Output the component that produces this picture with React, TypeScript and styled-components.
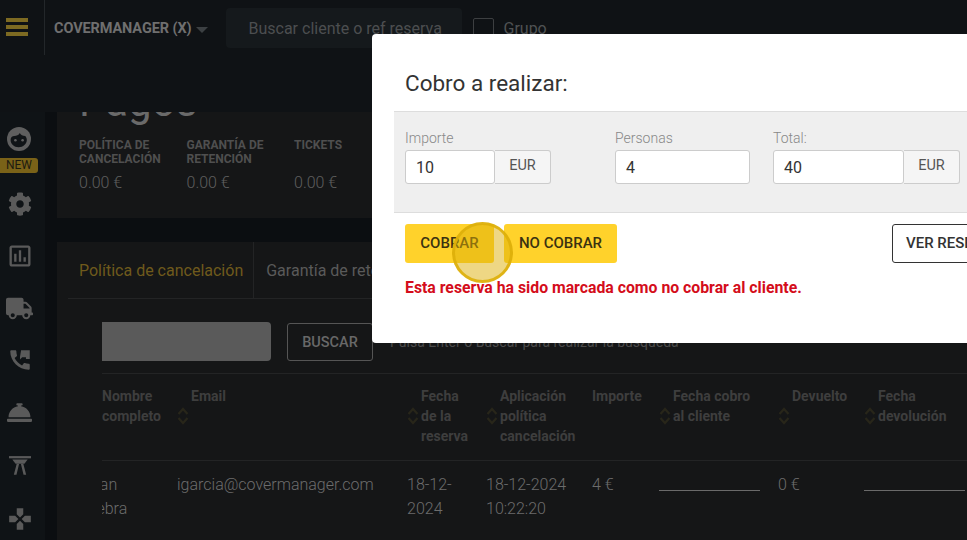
import React from 'react'
import styled, { createGlobalStyle } from 'styled-components'
import { FaCog, FaConciergeBell, FaTruck } from 'react-icons/fa'
import { MdOutlineAssessment, MdGamepad } from 'react-icons/md'

const GlobalStyle = createGlobalStyle`
  html, body {
    margin: 0;
    padding: 0;
    height: 100%;
    overflow: hidden;
    background: #0b0e11;
    font-family: Roboto, "Liberation Sans", sans-serif;
  }
  * { box-sizing: border-box; }
`

const FaceIcon = () => (
  <svg width="24" height="24" viewBox="0 0 24 24">
    <circle cx="12" cy="12" r="12" fill="#5f5f5f" />
    <path
      d="M3.6 13c0-2.6 1.6-4 3.6-4 2.4 0 4.4-.8 5.6-3 .8 1.8 3 3 5.4 3 1 .9 1.6 2.4 1.6 4 0 4-3.6 7.2-8.2 7.2S3.6 17 3.6 13z"
      fill="#101417"
    />
    <circle cx="8.4" cy="13.2" r="1.3" fill="#5f5f5f" />
    <circle cx="15.6" cy="13.2" r="1.3" fill="#5f5f5f" />
  </svg>
)

const PhoneIcon = () => (
  <svg width="26" height="26" viewBox="0 0 24 24" fill="#5a5a5a">
    <path d="M20.01 15.38c-1.23 0-2.42-.2-3.53-.56-.35-.12-.74-.03-1.01.24l-1.57 1.97c-2.83-1.35-5.48-3.9-6.89-6.83l1.95-1.66c.27-.28.35-.67.24-1.02-.37-1.11-.56-2.3-.56-3.53 0-.54-.45-.99-.99-.99H4.19C3.65 3 3 3.24 3 3.99 3 13.28 10.73 21 20.01 21c.71 0 .99-.63.99-1.18v-3.45c0-.54-.45-.99-.99-.99z" />
    <path d="M13 3h8v8h-3.5V9.5H14l-2 2V9z" />
  </svg>
)

const TableIcon = () => (
  <svg width="22" height="20" viewBox="0 0 20 18" fill="#5a5a5a">
    <rect x="0" y="0" width="20" height="2" />
    <path d="M3 3h14l-3 4H6z" />
    <path d="M7 7h2.2L6.8 17H4.4zM10.8 7H13l2.6 10h-2.4z" />
  </svg>
)

const SortIcon = () => (
  <svg width="12" height="18" viewBox="0 0 12 18" fill="none" stroke="#28261a" strokeWidth="2.2">
    <path d="M1.5 7 6 2l4.5 5M1.5 11 6 16l4.5-5" />
  </svg>
)

const stats = [
  { label: 'Política de cancelación', value: '0.00 €' },
  { label: 'Garantía de retención', value: '0.00 €' },
  { label: 'Tickets', value: '0.00 €' }
]

const columns = [
  { lines: ['Nombre', 'completo'], sort: true },
  { lines: ['Email'], sort: true },
  { lines: ['Fecha', 'de la', 'reserva'], sort: true },
  { lines: ['Aplicación', 'política', 'cancelación'], sort: true },
  { lines: ['Importe'], sort: false },
  { lines: ['Fecha cobro', 'al cliente'], sort: true },
  { lines: ['Devuelto'], sort: true },
  { lines: ['Fecha', 'devolución'], sort: true }
]

const App: React.FC = () => {
  return (
    <Page>
      <GlobalStyle />
      <TopBar>
        <MenuButton>
          <span />
          <span />
          <span />
        </MenuButton>
        <Brand>
          COVERMANAGER (X)
          <Caret />
        </Brand>
        <SearchBox>Buscar cliente o ref reserva</SearchBox>
        <GroupBox />
        <GroupLabel>Grupo</GroupLabel>
      </TopBar>

      <Body>
        <Sidebar>
          <FaceItem>
            <FaceIcon />
            <NewBadge>NEW</NewBadge>
          </FaceItem>
          <SideItem>
            <FaCog size={24} />
          </SideItem>
          <SideItem>
            <MdOutlineAssessment size={28} />
          </SideItem>
          <SideItem>
            <FaTruck size={27} />
          </SideItem>
          <SideItem>
            <PhoneIcon />
          </SideItem>
          <SideItem>
            <FaConciergeBell size={25} />
          </SideItem>
          <SideItem $shift={3}>
            <TableIcon />
          </SideItem>
          <SideItem $shift={6}>
            <MdGamepad size={26} />
          </SideItem>
        </Sidebar>

        <Content>
          <SummaryCard>
            <PageTitle>Pagos</PageTitle>
            <Stats>
              {stats.map((s) => (
                <Stat key={s.label}>
                  <StatLabel>{s.label}</StatLabel>
                  <StatValue>{s.value}</StatValue>
                </Stat>
              ))}
            </Stats>
          </SummaryCard>

          <ListCard>
            <Tabs>
              <Tab $active>Política de cancelación</Tab>
              <Tab>Garantía de retención</Tab>
              <Tab>Tickets</Tab>
            </Tabs>
            <Clip>
              <Inner>
                <SearchRow>
                  <SearchInput />
                  <SearchButton>BUSCAR</SearchButton>
                  <SearchHint>Pulsa Enter o Buscar para realizar la búsqueda</SearchHint>
                </SearchRow>
                <Table>
                  {columns.map((c) => (
                    <HeadCell key={c.lines.join(' ')}>
                      {c.sort && (
                        <SortSlot>
                          <SortIcon />
                        </SortSlot>
                      )}
                      <span>
                        {c.lines.map((line) => (
                          <HeadLine key={line}>{line}</HeadLine>
                        ))}
                      </span>
                    </HeadCell>
                  ))}
                  <Cell>
                    Ivan
                    <br />
                    Lebra
                  </Cell>
                  <Cell>igarcia@covermanager.com</Cell>
                  <Cell>18-12-2024</Cell>
                  <Cell>
                    18-12-2024
                    <br />
                    10:22:20
                  </Cell>
                  <Cell>4 €</Cell>
                  <Cell>
                    <Blank />
                  </Cell>
                  <Cell>0 €</Cell>
                  <Cell>
                    <Blank />
                  </Cell>
                </Table>
              </Inner>
            </Clip>
          </ListCard>
        </Content>
      </Body>

      <Modal>
        <ModalTitle>Cobro a realizar:</ModalTitle>
        <Band>
          <Field $width={146}>
            <FieldLabel>Importe</FieldLabel>
            <InputGroup>
              <ValueInput>10</ValueInput>
              <Addon>EUR</Addon>
            </InputGroup>
          </Field>
          <Field $width={135}>
            <FieldLabel>Personas</FieldLabel>
            <InputGroup>
              <ValueInput>4</ValueInput>
            </InputGroup>
          </Field>
          <Field $width={187}>
            <FieldLabel>Total:</FieldLabel>
            <InputGroup>
              <ValueInput>40</ValueInput>
              <Addon>EUR</Addon>
            </InputGroup>
          </Field>
        </Band>
        <Actions>
          <YellowButton $width={89}>COBRAR</YellowButton>
          <YellowButton $width={113}>NO COBRAR</YellowButton>
          <OutlineButton>VER RESERVA</OutlineButton>
        </Actions>
        <Warning>Esta reserva ha sido marcada como no cobrar al cliente.</Warning>
      </Modal>

      <ClickMark />
    </Page>
  )
}

export default App

const Page = styled.div`
  position: relative;
  width: 100%;
  height: 100vh;
  overflow: hidden;
  display: flex;
  flex-direction: column;
`

const TopBar = styled.header`
  position: relative;
  z-index: 1;
  height: 112px;
  flex-shrink: 0;
  background: #0f1215;
  display: flex;
  align-items: flex-start;
`

const MenuButton = styled.div`
  width: 45px;
  height: 55px;
  border-right: 1px solid #23272a;
  display: flex;
  flex-direction: column;
  gap: 3px;
  padding: 18px 0 0 6px;

  span {
    display: block;
    width: 22px;
    height: 4px;
    background: #7d6a22;
  }
`

const Brand = styled.div`
  display: flex;
  align-items: center;
  margin: 20px 0 0 9px;
  font-size: 14.5px;
  line-height: 18px;
  font-weight: 700;
  letter-spacing: -0.1px;
  color: #6f6f6f;
`

const Caret = styled.i`
  width: 0;
  height: 0;
  margin: 2px 0 0 5px;
  border-left: 6px solid transparent;
  border-right: 6px solid transparent;
  border-top: 6px solid #3c4043;
`

const SearchBox = styled.div`
  width: 236px;
  height: 40px;
  margin: 8px 0 0 18px;
  padding-left: 22px;
  border-radius: 4px;
  background: #15191c;
  color: #4c4e50;
  font-size: 16px;
  line-height: 42px;
  white-space: nowrap;
`

const GroupBox = styled.div`
  width: 21px;
  height: 21px;
  margin: 18px 0 0 11px;
  border: 1px solid #3d3f41;
  border-radius: 2px;
`

const GroupLabel = styled.div`
  margin: 19px 0 0 9px;
  font-size: 16px;
  line-height: 20px;
  color: #505254;
`

const Body = styled.div`
  flex: 1;
  min-height: 0;
  display: flex;
`

const Sidebar = styled.nav`
  width: 45px;
  flex-shrink: 0;
  background: #0f1316;
  display: flex;
  flex-direction: column;
  padding-top: 1px;
`

const FaceItem = styled.div`
  height: 65px;
  flex-shrink: 0;
  padding-top: 14px;
  display: flex;
  flex-direction: column;
  align-items: center;
  padding-right: 7px;
`

const NewBadge = styled.div`
  align-self: flex-start;
  width: 38px;
  height: 15px;
  margin-top: 7px;
  border-radius: 0 3px 3px 0;
  background: #7a6218;
  color: #1d1b10;
  font-size: 12px;
  line-height: 15px;
  text-align: center;
`

const SideItem = styled.div<{ $shift?: number }>`
  height: 52px;
  flex-shrink: 0;
  padding-right: 6px;
  padding-top: ${(p) => p.$shift || 0}px;
  display: flex;
  align-items: center;
  justify-content: center;
  color: #5a5a5a;
`

const Content = styled.main`
  flex: 1;
  min-width: 0;
  padding-left: 12px;
  display: flex;
  flex-direction: column;
`

const SummaryCard = styled.section`
  height: 106px;
  flex-shrink: 0;
  background: #151617;
  padding-left: 22px;
`

const PageTitle = styled.h1`
  margin: -35px 0 0;
  height: 50px;
  font-size: 42px;
  line-height: 50px;
  font-weight: 400;
  color: #6a6a6a;
`

const Stats = styled.div`
  display: flex;
  margin-top: 11px;
`

const Stat = styled.div`
  width: 107.5px;
`

const StatLabel = styled.div`
  width: 90px;
  height: 28px;
  font-size: 12px;
  line-height: 14px;
  font-weight: 700;
  text-transform: uppercase;
  color: #4f4f4f;
`

const StatValue = styled.div`
  margin-top: 7px;
  font-size: 16px;
  line-height: 20px;
  font-weight: 300;
  color: #5e5e5e;
`

const ListCard = styled.section`
  flex: 1;
  min-height: 0;
  margin-top: 24px;
  background: #151617;
`

const Tabs = styled.div`
  display: flex;
  height: 57px;
  margin-left: 11px;
  border-bottom: 1px solid #232425;
`

const Tab = styled.div<{ $active?: boolean }>`
  padding-top: 19px;
  font-size: 16px;
  line-height: 20px;
  white-space: nowrap;
  color: ${(p) => (p.$active ? '#6f5a1c' : '#5a5a5a')};
  border-right: 1px solid #232425;
  padding-right: ${(p) => (p.$active ? '10px' : '12px')};
  padding-left: ${(p) => (p.$active ? '0' : '12px')};
  margin-left: ${(p) => (p.$active ? '11px' : '0')};
`

const Clip = styled.div`
  margin-left: 45px;
  overflow: hidden;
`

const Inner = styled.div`
  width: 900px;
  margin-left: -14px;
`

const SearchRow = styled.div`
  display: flex;
  align-items: center;
  height: 75px;
  padding: 23px 0 12px 0;
  border-bottom: 1px solid #232425;
`

const SearchInput = styled.div`
  width: 183px;
  height: 39px;
  border-radius: 4px;
  background: #5a5a5a;
`

const SearchButton = styled.div`
  width: 86px;
  height: 38px;
  margin-left: 16px;
  border: 1px solid #555;
  border-radius: 3px;
  color: #686868;
  font-size: 14.5px;
  font-weight: 500;
  line-height: 38px;
  text-align: center;
`

const SearchHint = styled.div`
  margin-left: 17px;
  font-size: 14px;
  line-height: 20px;
  color: #4a4a4a;
  white-space: nowrap;
`

const Table = styled.div`
  display: grid;
  grid-template-columns: 89px 230px 79px 106px 67px 119px 86px 120px;
`

const HeadCell = styled.div`
  display: flex;
  height: 87px;
  padding-top: 12px;
  border-bottom: 1px solid #232425;
  font-size: 14px;
  line-height: 20px;
  font-weight: 700;
  color: #3e3e3e;
  white-space: nowrap;
`

const HeadLine = styled.div`
  height: 20px;
`

const SortSlot = styled.div`
  width: 14px;
  flex-shrink: 0;
  padding-top: 21px;
`

const Cell = styled.div`
  padding-top: 12px;
  padding-right: 6px;
  font-size: 16px;
  line-height: 24px;
  font-weight: 300;
  color: #6c6c6c;
`

const Blank = styled.div`
  width: 101px;
  height: 18px;
  border-bottom: 1px solid #6a6a6a;
`

const Modal = styled.div`
  position: absolute;
  z-index: 2;
  left: 372px;
  top: 34px;
  width: 660px;
  height: 309px;
  padding: 34px 0 0 22px;
  border-radius: 4px;
  background: #fff;
`

const ModalTitle = styled.h4`
  margin: 0 0 13px 11px;
  font-size: 22.5px;
  line-height: 30px;
  font-weight: 400;
  color: #333;
`

const Band = styled.div`
  display: grid;
  grid-template-columns: 210px 158px 187px;
  height: 102px;
  padding: 16px 0 0 11px;
  background: #efefef;
  border-top: 1px solid #ddd;
  border-bottom: 1px solid #ddd;
`

const Field = styled.div<{ $width: number }>`
  width: ${(p) => p.$width}px;
`

const FieldLabel = styled.div`
  height: 22px;
  font-size: 14px;
  line-height: 20px;
  font-weight: 300;
  color: #888;
`

const InputGroup = styled.div`
  display: flex;
  height: 34px;
`

const ValueInput = styled.div`
  flex: 1;
  padding: 0 10px;
  border: 1px solid #ccc;
  border-radius: 3px;
  background: #fff;
  color: #333;
  font-size: 16px;
  line-height: 34px;
`

const Addon = styled.div`
  width: 56px;
  flex-shrink: 0;
  border: 1px solid #ccc;
  border-left: none;
  border-radius: 0 3px 3px 0;
  background: #f5f5f5;
  color: #555;
  font-size: 14.5px;
  line-height: 29px;
  text-align: center;
`

const Actions = styled.div`
  display: flex;
  gap: 10px;
  padding: 11px 0 0 11px;
`

const YellowButton = styled.div<{ $width: number }>`
  width: ${(p) => p.$width}px;
  height: 39px;
  flex-shrink: 0;
  border-radius: 3px;
  background: #ffd22b;
  color: #3b3211;
  font-size: 15px;
  font-weight: 500;
  line-height: 38px;
  text-align: center;
`

const OutlineButton = styled.div`
  flex-shrink: 0;
  height: 39px;
  margin-left: 265px;
  padding: 0 13px;
  border: 1px solid #333;
  border-radius: 3px;
  background: #fff;
  color: #333;
  font-size: 15px;
  font-weight: 500;
  line-height: 37px;
  white-space: nowrap;
`

const Warning = styled.div`
  margin: 15px 0 0 11px;
  font-size: 15.8px;
  line-height: 20px;
  font-weight: 700;
  color: #d40d1b;
`

const ClickMark = styled.div`
  position: absolute;
  z-index: 3;
  left: 452px;
  top: 222px;
  width: 61px;
  height: 61px;
  border-radius: 50%;
  border: 3px solid rgba(222, 176, 10, 0.9);
  background: rgba(222, 176, 10, 0.5);
`
